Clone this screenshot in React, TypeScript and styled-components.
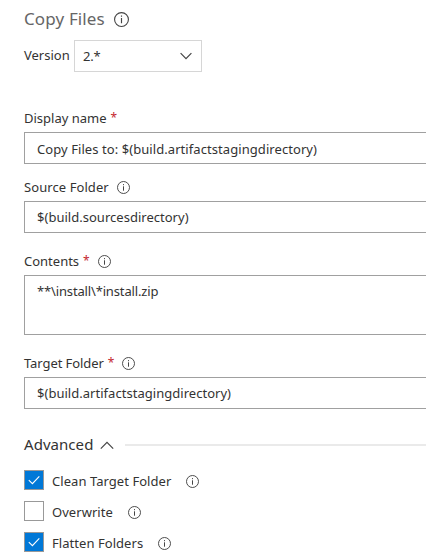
import React from "react";
import styled, { createGlobalStyle } from "styled-components";

const GlobalStyle = createGlobalStyle`
  * { box-sizing: border-box; }
  html, body { margin: 0; background: #fff; overflow: hidden; }
  body { font-family: "Noto Sans", "Open Sans", sans-serif; font-size: 13px; color: #333; }
`;

const Panel = styled.main`
  width: 426px;
  height: 560px;
  padding: 7px 0 0 24px;
  overflow: hidden;
  background: #fff;
`;

const Text = styled.span<{ $track?: number }>`
  letter-spacing: ${(p) => p.$track ?? 0}px;
  white-space: pre;
`;

const Title = styled.h1`
  display: flex;
  align-items: center;
  gap: 9px;
  height: 24px;
  margin: 0;
  font-size: 17px;
  font-weight: 400;
  line-height: 24px;
  color: #666;
`;

const VersionRow = styled.div`
  display: flex;
  gap: 4px;
  height: 32px;
  margin-top: 9px;
  line-height: 31px;
`;

const VersionLabel = styled.label`
  width: 46px;
  white-space: nowrap;
`;

const Select = styled.div`
  display: flex;
  justify-content: space-between;
  width: 128px;
  padding: 0 9px 0 8px;
  border: 1px solid #d6d6d6;
`;

const Field = styled.section<{ $top: number }>`
  margin-top: ${(p) => p.$top}px;
`;

const Label = styled.div`
  display: flex;
  align-items: center;
  height: 20px;
  line-height: 20px;
`;

const Required = styled.span`
  margin-left: 4px;
  font-size: 12px;
  color: #c4262e;
`;

const Box = styled.div<{ $height: number; $gap: number; $pad: number }>`
  height: ${(p) => p.$height}px;
  margin: ${(p) => p.$gap}px -2px 0 0;
  padding: ${(p) => p.$pad}px 12px 0;
  border: 1px solid #a0a0a0;
  line-height: 22px;
`;

const Info = styled.svg<{ $left?: number }>`
  flex: none;
  margin-left: ${(p) => p.$left ?? 0}px;
  color: #444;
`;

const Advanced = styled.div`
  display: flex;
  align-items: center;
  height: 24px;
  margin-top: 24px;
  font-size: 15px;
  line-height: 22px;
`;

const AdvancedText = styled(Text)`
  height: 24px;
`;

const Rule = styled.div`
  flex: 1;
  height: 2px;
  margin-left: 11px;
  background: #eaeaea;
`;

const Options = styled.div`
  display: flex;
  flex-direction: column;
  gap: 11px;
  margin-top: 13px;
`;

const Option = styled.div`
  display: flex;
  height: 20px;
  line-height: 22px;
`;

const OptionInfo = styled.span`
  display: flex;
  align-items: center;
  height: 23px;
`;

const Check = styled.span<{ $on: boolean }>`
  display: flex;
  flex: none;
  width: 20px;
  height: 20px;
  margin-right: 8px;
  border: 1px solid #999;
  background: ${(p) => (p.$on ? "#0078d7" : "#fff")};
`;

const InfoIcon = ({ size = 13, left = 0 }: { size?: number; left?: number }) => (
  <Info $left={left} width={size} height={size} viewBox="0 0 13 13" fill="none" stroke="currentColor">
    <circle cx="6.5" cy="6.5" r="6" strokeWidth="0.95" />
    <path d="M6.5 5.3V9.7M6.5 3.1V4.2" strokeWidth="1" />
  </Info>
);

const Chevron = ({ up = false, left = 0 }: { up?: boolean; left?: number }) => (
  <Info $left={left} width={up ? 14 : 12} height={up ? 14 : 28} viewBox={up ? "0 0 14 14" : "0 0 12 28"} fill="none" stroke="currentColor" strokeWidth="1.2">
    <path d={up ? "M.8 10.6L7 4.4L13.2 10.6" : "M.6 12.2L6 17.6L11.4 12.2"} />
  </Info>
);

type FieldData = {
  label: string; value: string; top: number; gap: number; height: number; pad: number;
  required?: boolean; info?: number; track?: number; valueTrack?: number;
};

const fields: FieldData[] = [
  { label: "Display name", value: "Copy Files to: $(build.artifactstagingdirectory)", top: 36, gap: 4, height: 32, pad: 5, required: true, valueTrack: 0.07 },
  { label: "Source Folder", value: "$(build.sourcesdirectory)", top: 13, gap: 4, height: 32, pad: 4, info: 8, track: 0.08, valueTrack: 0.02 },
  { label: "Contents", value: "**\\install\\*install.zip", top: 18, gap: 4, height: 60, pad: 4, required: true, info: 8, valueTrack: -0.15 },
  { label: "Target Folder", value: "$(build.artifactstagingdirectory)", top: 18, gap: 4, height: 32, pad: 4, required: true, info: 8, track: -0.08, valueTrack: 0.03 },
];

const options = [
  { label: "Clean Target Folder", on: true, track: 0.05 },
  { label: "Overwrite", on: false, track: 0.05 },
  { label: "Flatten Folders", on: true, track: 0.05 },
];

export default function App() {
  return (
    <>
      <GlobalStyle />
      <Panel>
        <Title><Text $track={0.13}>Copy Files</Text><InfoIcon size={15} /></Title>
        <VersionRow>
          <VersionLabel><Text>Version</Text></VersionLabel>
          <Select><Text $track={-0.2}>2.*</Text><Chevron /></Select>
        </VersionRow>
        {fields.map((f) => (
          <Field key={f.label} $top={f.top}>
            <Label>
              <Text $track={f.track}>{f.label}</Text>
              {f.required && <Required>*</Required>}
              {f.info !== undefined && <InfoIcon left={f.info} />}
            </Label>
            <Box $height={f.height} $gap={f.gap} $pad={f.pad}><Text $track={f.valueTrack}>{f.value}</Text></Box>
          </Field>
        ))}
        <Advanced><AdvancedText $track={0.05}>Advanced</AdvancedText><Chevron up left={7} /><Rule /></Advanced>
        <Options>
          {options.map((o) => (
            <Option key={o.label}>
              <Check $on={o.on}>
                {o.on && (
                  <svg width="18" height="18" viewBox="0 0 18 18" fill="none" stroke="#fff" strokeWidth="1.1">
                    <path d="M3.8 9.2L7.4 12.6L14.3 5.3" />
                  </svg>
                )}
              </Check>
              <Text $track={o.track}>{o.label}</Text>
              <OptionInfo><InfoIcon left={15} /></OptionInfo>
            </Option>
          ))}
        </Options>
      </Panel>
    </>
  );
}
